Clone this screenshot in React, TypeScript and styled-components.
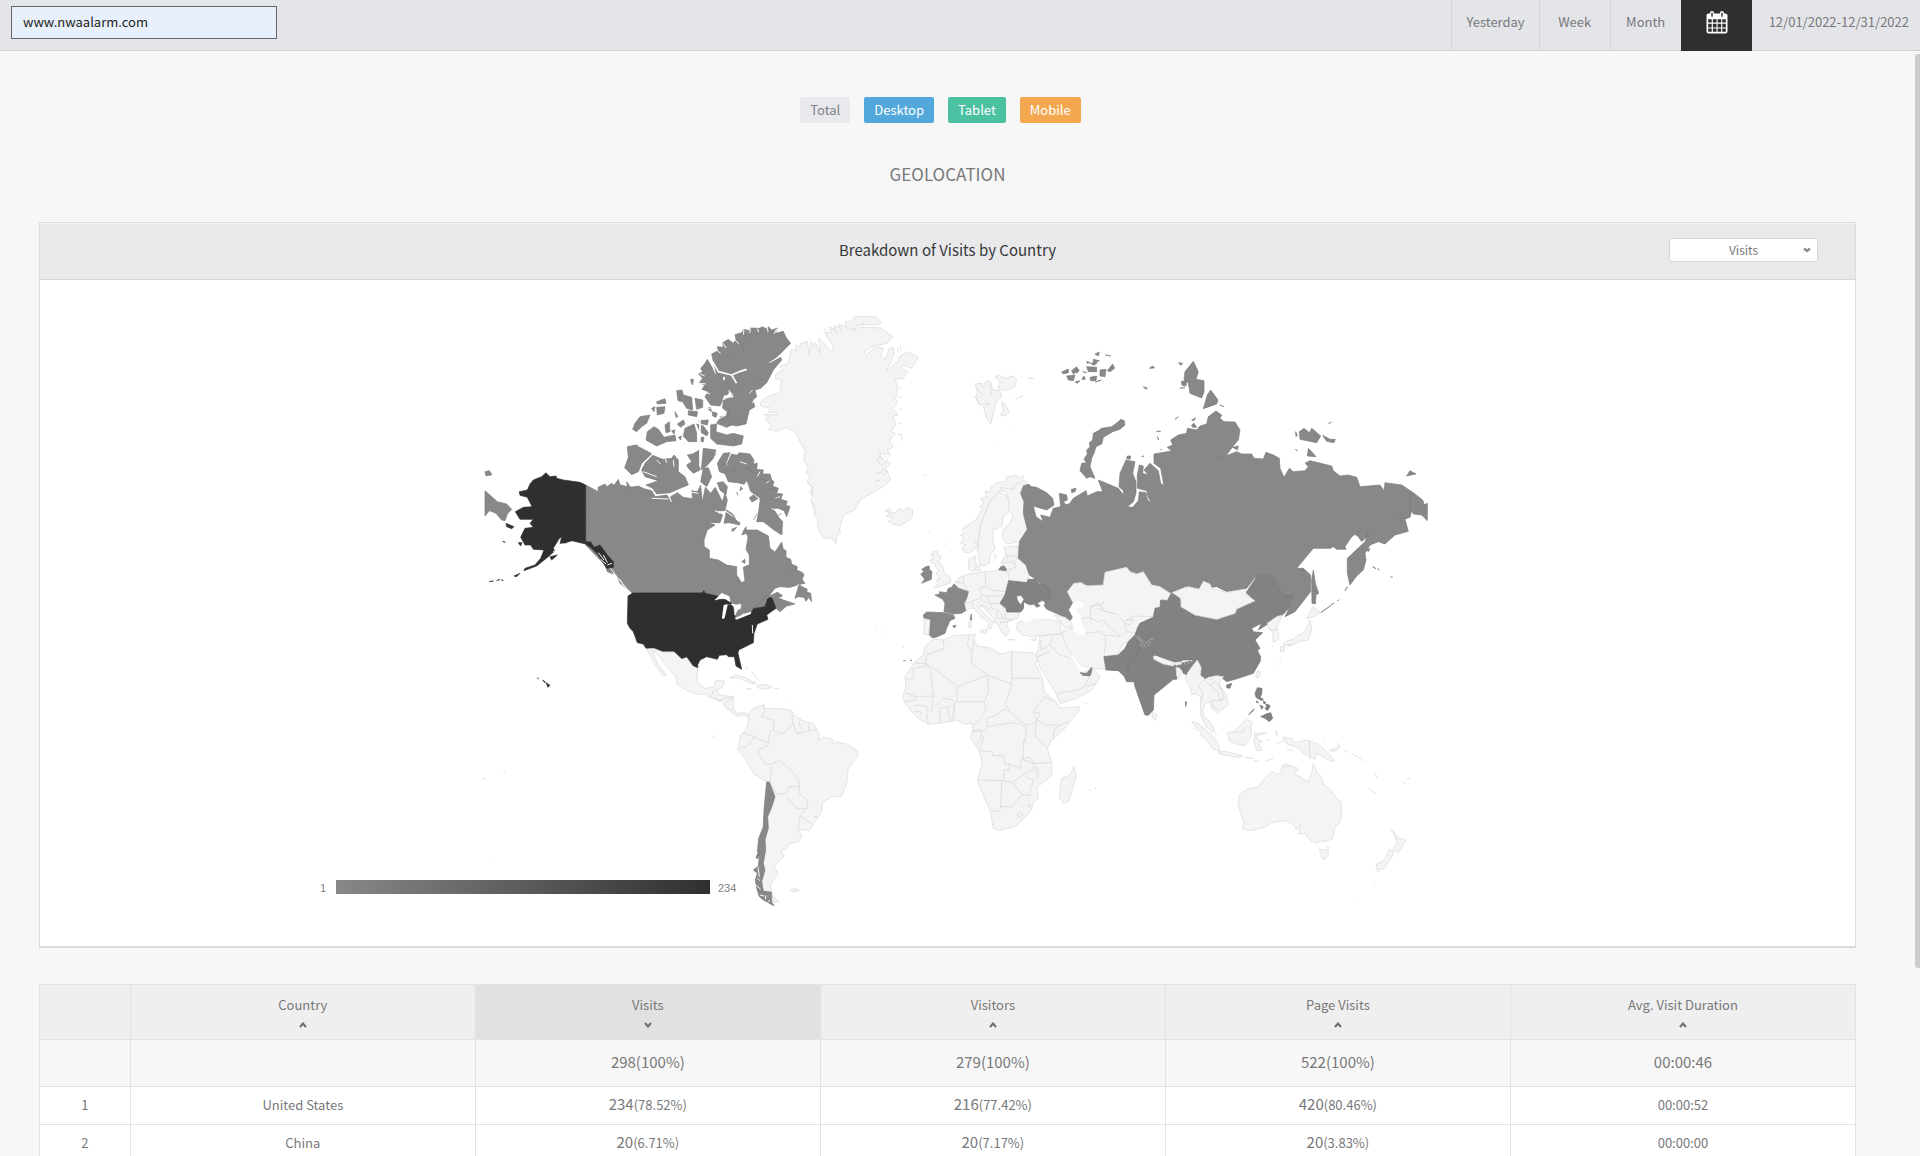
import React from "react";
import styled, { createGlobalStyle } from "styled-components";

const Global = createGlobalStyle`
  * { box-sizing: border-box; }
  body {
    margin: 0;
    background: #f7f7f7;
    color: #77787a;
    font-family: "Noto Sans CJK SC", "Noto Sans", sans-serif;
    font-size: 13px;
    line-height: 20px;
  }
  button, input, select { font: inherit; color: inherit; }
`;

const Page = styled.div`
  height: 100vh;
  display: flex;
  flex-direction: column;
`;

const TopBar = styled.header`
  display: flex;
  justify-content: space-between;
  align-items: stretch;
  height: 51px;
  flex: none;
  background: #e4e5e9;
  box-shadow: inset 0 -1px #d0d1d4;
`;

const SiteInput = styled.input`
  width: 266px;
  height: 33px;
  margin: 6px 0 0 11px;
  padding: 0 11px 2px;
  border: 1px solid #66686b;
  border-radius: 0;
  background: #e8effd;
  color: #1d1e20;
  outline: none;
`;

const Ranges = styled.nav`
  display: flex;
`;

const RangeButton = styled.button<{ $active?: boolean }>`
  min-width: 71px;
  padding: 0 14px 8px;
  border: 0;
  border-left: 1px solid ${(p) => (p.$active ? "#2f2f2f" : "#d5d6da")};
  background: ${(p) => (p.$active ? "#2f2f2f" : "transparent")};
  color: ${(p) => (p.$active ? "#fff" : "#77787a")};
  display: flex;
  align-items: center;
  justify-content: center;
`;

const RangeText = styled.span`
  padding: 0 11px 8px 17px;
  display: flex;
  align-items: center;
`;

const Frame = styled.div`
  position: relative;
  flex: 1;
  min-height: 0;
`;

const Thumb = styled.div`
  position: absolute;
  top: 3px;
  right: 0;
  width: 5px;
  height: calc(83% - 3px);
  border-radius: 3px 0 0 3px;
  background: #cdcdcd;
`;

const Scroller = styled.main`
  height: 100%;
  overflow-y: auto;
  scrollbar-width: none;
  padding: 46px 64px 0 39px;
`;

const Pills = styled.div`
  display: flex;
  justify-content: center;
  gap: 14px;
  padding-right: 14px;
`;

const Pill = styled.button<{ $bg: string; $fg?: string }>`
  height: 26px;
  padding: 0 10px 1px;
  border: 0;
  border-radius: 2px;
  background: ${(p) => p.$bg};
  color: ${(p) => p.$fg || "#fff"};
`;

const Title = styled.h1`
  margin: 38px 0 36px;
  font-size: 17px;
  line-height: 25px;
  font-weight: 400;
  text-align: center;
`;

const Card = styled.section`
  border: 1px solid #dcdcde;
  border-bottom-width: 2px;
  background: #fff;
`;

const CardHead = styled.div`
  display: grid;
  grid-template-columns: 1fr auto 1fr;
  align-items: center;
  height: 57px;
  padding-bottom: 4px;
  border-top: 1px solid #f7f7f7;
  border-bottom: 1px solid #d6d6d8;
  background: #e9e9eb;
`;

const CardTitle = styled.h2`
  grid-column: 2;
  margin: 0;
  font-size: 15px;
  font-weight: 400;
  color: #37383a;
`;

const SelectWrap = styled.label`
  position: relative;
  justify-self: end;
  width: 149px;
  margin-right: 37px;
  svg {
    position: absolute;
    right: 7px;
    top: 9px;
    pointer-events: none;
  }
`;

const Metric = styled.select`
  display: block;
  width: 100%;
  height: 24px;
  padding: 0;
  appearance: none;
  border: 1px solid #d6d6d8;
  border-radius: 3px;
  background: #fff;
  font-size: 12px;
  text-align: center;
  text-align-last: center;
`;

const MapSvg = styled.svg`
  display: block;
  width: 100%;
  height: auto;
`;

const LegendText = styled.text`
  font-family: "Liberation Sans", Arial, sans-serif;
  font-size: 11px;
  fill: #808080;
`;

const Table = styled.table`
  width: 100%;
  margin-top: 36px;
  table-layout: fixed;
  border-collapse: collapse;
  border: 1px solid #e2e2e2;
  background: #fff;
  text-align: center;
`;

const Th = styled.th<{ $sorted?: boolean }>`
  width: 19%;
  height: 55px;
  padding: 0 0 1px;
  border: 1px solid #e2e2e2;
  background: ${(p) => (p.$sorted ? "#e1e1e1" : "#efefef")};
  font-weight: 400;
  &:first-child { width: 5%; }
`;

const SortButton = styled.button`
  width: 100%;
  padding: 0;
  border: 0;
  background: none;
  display: flex;
  flex-direction: column;
  align-items: center;
  gap: 7px;
`;

const Td = styled.td<{ $total?: boolean }>`
  height: ${(p) => (p.$total ? 47 : 38)}px;
  padding: 0 0 2px;
  border: 1px solid #e2e2e2;
  background: ${(p) => (p.$total ? "#f7f7f7" : "#fff")};
  font-size: ${(p) => (p.$total ? 15 : 13)}px;
`;

const Count = styled.span`
  font-size: 15px;
`;

const LIGHT = { fill: "#f4f4f4", stroke: "#dddddd" };
const GREY = { fill: "#888888", stroke: "#7a7a7a" };
const ASIA = { fill: "#828282", stroke: "#737373" };
const DARK = { fill: "#2f2f2f", stroke: "#2f2f2f" };
const WATER = { fill: "#ffffff", stroke: "#ffffff" };
const LINES = { fill: "none", stroke: "#d9d9d9" };
const FJORDS = { fill: "none", stroke: "#ffffff" };
const INLETS = { fill: "none", stroke: "#fafafa" };
const EDGES = { fill: "none", stroke: "#777777" };

type Land = [{ fill: string; stroke: string }, string];

// Each sheet holds its land in thirds of a map unit, counted from its own corner.
const SHEETS: { x: number; y: number; lands: Land[] }[] = [
  {
    // Americas
    x: 470,
    y: 300,
    lands: [
      // Greenland and Iceland
      [LIGHT, "M960 168 965 148 982 152 975 135 992 142 990 132 1012 124 1018 168 1024 125 1030 140 1036 128 1050 160 1046 115 1058 125 1088 158 1090 140 1078 120 1064 98 1085 98 1078 80 1095 90 1092 76 1110 84 1106 72 1130 82 1125 66 1146 62 1156 50 1215 50 1235 66 1225 74 1160 74 1168 82 1235 84 1268 110 1252 130 1205 140 1182 155 1188 165 1215 142 1240 145 1232 165 1245 180 1258 146 1270 142 1272 165 1248 216 1285 182 1290 168 1312 155 1345 172 1325 205 1300 195 1292 208 1312 215 1300 235 1275 238 1284 262 1280 290 1270 292 1284 305 1268 325 1284 345 1266 350 1278 372 1264 392 1276 402 1258 420 1270 440 1252 452 1262 465 1228 458 1240 480 1262 490 1248 505 1262 540 1240 560 1190 588 1170 600 1155 628 1120 645 1108 690 1112 700 1100 705 1098 732 1085 715 1060 715 1045 690 1042 660 1032 645 1036 620 1022 600 1032 590 1018 575 1028 560 1010 545 1020 530 1008 520 1015 500 1000 480 1006 455 990 425 978 398 950 382 920 394 895 388 905 375 885 358 900 352 880 343 920 345 922 338 895 336 902 324 872 318 872 306 892 290 930 278 935 240 915 235 918 222 940 210 930 200 955 190z"],
      [LIGHT, "M1245 632 1260 640 1250 630 1258 625 1268 640 1280 636 1285 625 1298 632 1312 622 1328 630 1328 650 1315 662 1290 677 1268 672 1255 664 1270 655 1248 648 1264 643z"],
      [LINES, "M1290 138 1294 152M1282 142 1286 158M1288 262 1296 264M1286 290 1294 294M1288 325 1296 330M1284 372 1292 370M1282 405 1294 402 1296 422M1232 462 1222 485 1240 498M1220 520 1240 515M1212 545 1232 540M1090 85 1105 100M1108 80 1118 95M1130 90 1160 84 1148 100M1170 75 1180 68 1175 85M1240 465 1255 478 1245 490M1228 470 1238 478M1235 505 1252 515 1240 528M1012 545 1028 565 1026 590M1024 605 1036 640M1060 85 1075 100"],
      // Canadian mainland
      [GREY, "M347 555 385 575 384 562 405 552 410 560 425 550 432 556 445 538 450 554 472 560 470 545 482 562 505 558 522 566 545 572 556 590 590 585 607 612 602 590 622 578 640 592 668 596 665 572 682 575 692 556 697 606 706 562 722 580 736 562 757 605 765 580 772 600 765 632 735 632 758 645 750 668 708 668 735 675 712 690 702 720 703 740 718 750 718 775 745 780 770 795 800 800 800 825 815 848 825 843 820 802 838 794 838 765 828 748 834 712 826 690 862 690 895 708 900 745 915 756 935 726 940 748 948 752 948 772 962 778 965 792 982 800 980 810 998 818 1002 825 996 838 1005 850 990 853 960 862 915 865 895 890 940 868 935 890 922 892 940 900 965 908 975 912 950 918 930 935 918 925 906 893 892 898 885 920 850 925 840 938 820 940 796 958 790 938 800 918 780 905 740 888 700 880 487 880 475 868 450 850 440 825 412 815 405 795 347 735z"],
      [GREY, "M985 853 1000 862 1012 868 1010 876 1022 880 1025 905 1016 892 1008 904 1002 892 985 890 975 895 980 875z"],
      // Victoria, Banks and neighbouring islands
      [GREY, "M472 440 498 435 520 445 545 462 515 490 505 515 485 524 464 503 475 472z"],
      [GREY, "M548 466 578 478 605 475 612 465 625 480 625 515 645 530 655 555 630 565 600 578 560 582 548 565 528 555 565 542 525 530 515 510 525 490z"],
      [GREY, "M652 465 668 462 688 450 690 510 670 520 655 505 650 495 665 485z"],
      [GREY, "M700 445 738 450 730 475 710 498 694 510z"],
      [GREY, "M700 505 715 503 725 530 710 560 692 545z"],
      [GREY, "M760 460 780 458 768 490 780 510 775 525 748 515 742 490z"],
      [GREY, "M742 548 760 545 772 560 768 585 750 570z"],
      // Baffin Island
      [GREY, "M785 462 800 466 808 458 840 462 852 480 850 492 862 490 860 508 880 510 878 522 900 522 905 540 912 545 908 558 925 565 920 580 938 582 932 598 952 604 948 615 960 620 950 650 942 632 925 625 910 625 925 650 938 665 935 705 912 690 880 665 860 665 865 640 870 600 840 580 830 555 800 548 775 545 765 520 778 505 772 490z"],
      [GREY, "M770 630 785 640 812 662 808 675 778 668 762 670z"],
      [GREY, "M800 682 788 695 785 688zM822 690 828 680 830 700 815 705zM815 785 825 778 825 790zM855 585 866 595 850 605 838 595zM800 578 810 575 806 590z"],
      // Ellesmere and Axel Heiberg
      [GREY, "M725 162 745 152 742 140 760 142 758 128 775 118 790 130 798 118 795 104 815 98 822 88 838 92 842 84 870 85 875 80 890 86 895 80 905 90 922 84 915 100 940 94 948 112 962 130 930 162 900 188 932 172 935 180 910 210 890 248 872 265 855 270 860 290 848 300 855 320 838 330 828 372 800 378 785 375 770 382 740 370 752 350 768 348 772 335 758 325 760 300 790 290 772 260 762 238 740 225 730 185z"],
      [GREY, "M712 178 725 200 735 222 765 240 778 265 775 280 758 300 750 318 722 315 705 290 715 275 696 268 704 255 688 248 698 235 686 222 698 215 692 205 705 190z"],
      // Queen Elizabeth Islands
      [GREY, "M722 375 740 372 738 395 770 405 790 400 820 408 815 432 790 438 740 432 722 415z"],
      [GREY, "M620 272 636 270 640 285 665 292 668 330 650 325 638 305 624 302zM675 295 698 300 698 322 680 328zM560 305 585 296 588 310 562 312zM560 322 585 320 582 340 562 345zM545 325 555 320 552 335zM510 350 540 345 530 370 515 380 500 395 488 388 495 370zM532 395 552 380 565 388 582 412 615 405 618 422 590 425 560 438 528 420zM585 375 598 365 600 395 588 398zM605 392 615 390 612 402zM622 372 640 360 645 372 632 382zM645 385 672 372 680 400 680 425 655 425 640 408zM680 372 700 378 715 398 710 408 690 395zM690 412 702 412 700 425 688 425zM662 238 670 238 668 255 664 248zM686 362 715 360 712 375 690 370zM727 335 742 340 738 352 728 348zM655 332 683 335 680 350 655 345zM615 335 624 350 618 352zM712 325 722 322 724 335zM625 412 634 408 632 420z"],
      [FJORDS, "M728 185 745 215 785 225 808 215 830 208M785 225 800 250M762 230 762 240M690 360 690 500M760 300 765 288 790 290M748 388 775 392 790 384 818 396"],
      [INLETS, "M898 188 930 170M545 595 600 597 605 606M810 485 830 492M640 500 662 555M765 632 790 650M735 632 750 640M655 575 685 580M775 270 790 285M600 350 605 365M640 335 655 350M700 330 728 322M740 360 768 345M668 445 712 440M562 448 600 468M505 438 540 455M520 515 560 530M720 440 780 440M838 100 842 86M822 90 820 104M795 120 808 132M862 86 866 96M892 82 894 96M920 86 912 102M742 152 752 160M760 130 768 144M848 270 838 280M858 300 846 308M690 222 704 228M690 250 708 252M705 276 720 282M418 800 440 830 470 865M430 815 436 832M450 838 460 856M870 515 862 530M900 540 888 550M930 590 915 596M905 625 930 640M560 480 572 492M610 480 612 500M585 475 590 488"],
      [WATER, "M798 550 822 556 830 545 840 575 868 595 862 640 835 645 832 680 800 660 790 640 808 600z"],
      [GREY, "M838 594 850 584 864 596 846 606zM812 560 818 566 810 572z"],
      [EDGES, "M805 118 822 152M838 98 845 112M770 170 790 160M708 668 735 675M565 480 582 495M880 545 905 540M885 570 915 565M898 600 925 595M480 572 485 560M850 925 900 880M740 460 720 480M590 585 600 600M830 500 850 520M920 650 935 640M775 335 775 350M875 82 872 98M905 92 900 106M808 375 806 360M780 378 784 364M752 420 770 428M790 410 800 425M740 190 752 184M698 268 712 262M862 640 850 660M980 808 962 812M880 240 860 232M800 250 812 272M940 700 930 690M750 500 765 490M800 500 785 515"],
      // United States
      [DARK, "M474 888 488 879 698 879 701 872 706 880 750 890 735 900 765 895 780 905 785 912 762 915 756 955 764 955 772 916 784 914 793 922 792 945 800 958 843 938 850 926 885 920 892 898 898 893 906 894 918 925 890 945 894 958 862 972 852 1000 850 1028 806 1050 804 1060 815 1108 798 1098 793 1070 775 1070 770 1064 748 1066 742 1078 710 1070 690 1080 682 1105 668 1098 650 1072 635 1077 612 1055 578 1055 552 1045 528 1045 520 1032 502 1028 490 995 480 985 472 970z"],
      [WATER, "M735 900 755 880 778 890 780 905 765 896 748 896zM762 916 772 914 762 955 757 955zM785 912 800 915 812 912 812 925 802 930 795 945 792 922zM795 955 842 936 842 941 800 958zM915 868 930 862 975 868 985 853 975 885 965 895 940 885 930 880z"],
      [INLETS, "M847 975 848 1000M690 1085 684 1098"],
      [DARK, "M347 555 330 547 280 540 260 535 258 528 240 530 228 518 215 530 190 540 180 552 172 570 148 575 150 586 172 592 186 620 160 622 136 635 150 658 190 658 180 670 190 682 165 685 152 712 165 735 182 735 190 748 222 750 212 775 195 795 165 805 162 812 200 798 235 770 255 752 250 745 268 715 275 712 270 730 295 728 305 722 347 732 362 742 385 765 410 805 430 802 430 785 412 765 390 735 372 742 362 726 347 725zM240 770 262 765 245 780zM108 670 132 680 125 686 110 680zM145 728 156 728 152 738zM98 724 106 727zM132 828 150 820 140 830zM58 845 70 843zM80 842 90 838zM94 840 100 841z"],
      [INLETS, "M385 758 402 780M392 778 408 792M400 765 412 788M412 795 426 790M268 735 250 756M290 730 300 726"],
      [DARK, "M228 1148 240 1156 234 1162zM218 1140 226 1146 224 1148zM202 1134 206 1136z"],
      [GREY, "M45 515 58 512 66 524 48 528zM45 572 82 605 110 612 125 628 112 642 105 662 95 660 78 640 58 632 45 648z"],
      // Mexico, Central America and the Caribbean
      [LIGHT, "M530 1047 552 1046 578 1056 612 1056 635 1078 650 1073 668 1098 682 1105 682 1140 690 1155 705 1165 730 1162 738 1142 763 1142 758 1160 742 1170 746 1185 790 1190 790 1225 800 1240 825 1238 840 1245 835 1252 822 1245 800 1248 770 1225 755 1205 720 1192 705 1182 680 1183 650 1170 622 1155 618 1130 590 1100 562 1060 545 1050 562 1090 590 1125 580 1127 550 1085z"],
      [LIGHT, "M778 1134 800 1126 825 1132 858 1150 845 1151 805 1134zM862 1156 885 1153 905 1162 885 1168 862 1163zM830 1166 845 1168zM914 1165 926 1166z"],
      [LINES, "M725 1190 730 1172 742 1168M745 1204 765 1195 790 1192M765 1210 790 1192M770 1226 790 1228M735 1192 745 1200M825 1098 835 1108M845 1115 868 1142M962 1195 963 1196M728 1306 731 1314M34 1437 46 1435M100 1412 106 1415M70 1680 72 1682M1213 988 1218 990M1235 995 1240 997M1298 1042 1302 1044"],
      // South America
      [LIGHT, "M835 1252 838 1240 850 1225 885 1213 880 1225 905 1225 950 1228 965 1232 970 1245 1000 1263 1030 1270 1048 1305 1045 1322 1060 1312 1088 1318 1088 1332 1100 1326 1130 1332 1162 1352 1163 1370 1135 1405 1130 1450 1115 1488 1085 1490 1058 1508 1055 1535 1028 1575 1018 1592 985 1588 995 1610 985 1625 955 1632 950 1648 932 1652 942 1668 912 1700 925 1720 900 1755 905 1776 880 1775 870 1700 890 1446 850 1420 825 1375 805 1350 805 1335 812 1305 825 1295 835 1270z"],
      [LINES, "M880 1217 885 1235 875 1250 912 1260 910 1290 900 1295 895 1335 865 1350 865 1365 885 1392 905 1392 930 1382 968 1415 985 1440 988 1460 958 1460 950 1480 920 1482 900 1450 905 1400M820 1300 850 1308 865 1318 895 1328M855 1310 830 1340 812 1342M910 1290 935 1302 945 1295 970 1272 965 1250 975 1245M970 1272 980 1300 1000 1298 1025 1290 1040 1290M988 1262 990 1280 1000 1295M1018 1268 1015 1292M988 1460 988 1480 1010 1500 1012 1525 980 1525 950 1490M1018 1515 990 1548 1025 1572M990 1548 985 1588M1030 1550 1045 1552"],
      [GREY, "M890 1446 898 1446 915 1490 905 1522 893 1550 895 1585 885 1620 887 1650 880 1690 885 1710 875 1745 880 1773 905 1777 905 1805 912 1818 895 1808 880 1800 868 1790 860 1765 856 1740 862 1720 850 1710 865 1698 868 1670 862 1655 866 1615 880 1580 882 1530zM862 1662 868 1662 864 1676 858 1674z"],
      [INLETS, "M864 1700 868 1730M858 1755 872 1768M870 1785 882 1788M888 1786 886 1798M892 1808 900 1800M862 1735 870 1742"],
      [LIGHT, "M906 1782 925 1806 910 1806zM962 1770 975 1766 988 1770 978 1775 965 1774z"],
    ],
  },
  {
    // Northern Europe
    x: 890,
    y: 300,
    lands: [
      [LIGHT, "M255 252 275 250 280 262 290 242 302 245 308 270 330 272 334 292 318 305 310 340 302 372 290 355 280 320 300 310 270 315 258 290 262 275zM315 230 325 225 345 235 370 228 380 240 375 260 350 272 325 265 330 245zM335 305 345 312 358 335 345 348 332 345 340 330zM415 236 425 232 430 236zM388 292 400 288z"],
      [LINES, "M254 288 268 315M298 250 305 285M262 270 280 285M378 292 380 298M364 375 368 372M318 438 320 438M102 528 110 523M115 697 120 700M162 730 165 735M355 760 350 755"],
      // Norway, Sweden, Finland
      [LIGHT, "M410 545 395 540 402 528 385 534 378 524 365 530 350 530 345 545 320 548 305 560 300 575 285 575 290 590 272 595 282 610 268 620 278 628 258 660 240 670 215 690 225 700 212 705 220 715 212 730 228 735 215 745 225 758 240 758 262 740 270 680 285 640 302 600 325 575 355 570 380 560 392 565z"],
      [LIGHT, "M262 748 272 680 285 640 302 600 325 575 352 590 362 632 340 650 335 680 310 690 308 720 315 745 300 765 298 788 285 798 270 795z"],
      [LIGHT, "M328 562 350 580 356 600 356 632 370 645 360 668 340 690 336 715 350 732 388 725 412 688 400 640 402 605 392 580 402 560 385 545 370 568z"],
      // Denmark, Baltics, Belarus
      [LIGHT, "M236 778 256 768 255 785 262 795 252 815 236 808zM255 802 268 798 270 812 258 812zM342 742 385 738 384 775 408 795 418 825 410 848 355 842 350 812 340 812 335 788 342 770 352 775z"],
      [LINES, "M345 765 382 770M335 788 370 785 384 775M370 785 378 800 350 812M310 770 318 765 315 778M252 722 270 745M410 848 355 842"],
      [GREY, "M326 810 332 800 342 798 350 808 347 812z"],
      // British Isles
      [LIGHT, "M130 755 145 752 142 765 155 770 145 785 160 800 162 818 180 832 182 848 150 860 130 865 145 850 138 840 150 838 138 820 148 812 138 805 135 790 122 788 128 775z"],
      [LINES, "M118 770 126 762M126 758 132 765M118 782 128 778"],
      [GREY, "M92 822 102 815 95 808 108 800 118 798 118 808 126 815 124 838 95 850 104 838z"],
      // Franz Josef Land
      [GREY, "M515 216 535 207 535 218 520 222zM545 212 560 200 565 212 550 222zM530 228 555 225 550 242 535 240zM560 205 568 210 560 220zM555 245 570 243 562 250zM575 238 582 228 586 238zM590 200 620 202 620 215 595 215zM600 232 620 228 618 242 602 242zM630 210 648 208 645 230 630 228zM652 212 668 192 674 205 660 215zM610 178 628 182 610 190zM615 162 628 156 625 168zM590 184 600 188 592 190zM600 190 622 188 612 196zM646 165 662 168zM616 246 634 240zM578 215 590 218zM778 205 788 198 794 204zM760 260 772 264 768 268z"],
      // Novaya Zemlya
      [GREY, "M703 362 705 375 690 388 668 395 640 412 635 432 618 440 612 460 605 475 600 500 615 535 600 530 590 535 570 512 575 490 590 488 582 478 592 462 590 450 600 440 598 428 608 420 610 400 625 392 635 385 665 380 685 365 692 358z"],
    ],
  },
  {
    // Russia
    x: 1050,
    y: 340,
    lands: [
      [GREY, "M-80 438 -65 432 -55 440 -40 442 -10 458 8 475 12 495 -10 510 -50 498 -42 530 -20 545 -28 525 -15 528 0 532 10 505 32 500 28 460 50 465 52 480 40 485 48 494 58 492 70 475 108 452 112 468 140 455 158 455 145 420 205 445 220 465 220 452 207 440 210 400 228 360 255 365 248 400 258 425 258 460 250 485 232 500 248 502 265 482 268 455 288 458 292 480 308 488 295 475 290 452 262 445 262 405 268 375 280 378 278 400 295 405 282 390 300 370 325 392 332 430 342 438 332 385 312 370 312 342 365 333 352 322 368 315 362 300 385 285 410 280 412 265 440 270 450 258 470 252 475 230 498 213 515 225 510 235 522 245 555 246 570 270 565 300 552 315 530 345 518 350 535 345 560 335 575 342 605 342 612 355 640 357 648 337 670 345 688 355 690 385 702 412 718 385 730 395 765 392 775 380 765 370 780 362 845 378 850 392 870 408 895 405 920 412 930 440 990 435 1002 452 1005 428 1055 435 1090 458 1118 480 1120 495 1132 490 1132 542 1115 525 1090 522 1085 512 1080 530 1065 538 1075 574 1035 585 1005 612 985 605 960 615 945 640 948 660 940 690 920 708 900 735 892 700 892 655 945 605 955 575 950 590 935 605 925 590 915 583 905 590 885 620 888 628 860 628 850 620 842 625 790 625 740 685 760 685 782 705 782 755 735 815 705 830 725 790 728 768 700 768 665 710 640 703 615 712 590 745 530 755 500 740 480 742 460 725 445 748 405 740 362 758 345 755 330 740 305 735 280 697 255 702 240 695 230 682 165 697 160 738 120 738 90 728 70 732 52 755 70 785 55 810 68 832 60 842 30 825 -10 808 -25 785 0 760 -40 720 -62 705 -72 675 -95 655 -92 605 -68 568 -80 520 -78 485 -88 460z"],
      [EDGES, "M1080 455 1080 532 1042 535M502 362 515 350M1120 482 1122 505"],
      // Severnaya Zemlya and the arctic islands
      [GREY, "M430 64 445 95 438 118 462 122 462 155 455 174 420 160 415 128 402 120 405 95zM394 124 410 122 408 138 396 136zM390 145 405 142zM386 68 398 70 392 76zM482 150 504 180 500 192 460 206 472 165zM510 195 522 200zM748 275 762 265 778 278 785 265 812 288 800 308 750 298zM818 286 840 298 856 298 852 308 830 304zM775 325 785 335 798 350 772 348zM1070 408 1080 392 1098 402zM737 275 742 285 738 290zM736 328 742 332zM836 250 844 247zM375 238 385 230zM425 240 437 234 432 242zM320 274 332 274zM322 290 326 300zM232 348 242 348 240 358 230 356zM275 350 282 348zM64 448 78 445 75 455 65 458zM425 255 432 250 440 262 428 262zM332 328 336 330zM548 322 565 318 562 330z"],
      // Sakhalin and the Kurils
      [GREY, "M790 690 796 730 806 760 798 765 796 792 786 790 785 720zM746 688 760 688 762 695zM950 630 960 625 955 635zM968 680 978 686zM982 686 988 690zM1022 711 1028 712zM885 752 892 740zM862 783 866 779zM842 796 852 789zM812 818 842 797z"],
    ],
  },
  {
    // Africa, southern Europe and the Middle East
    x: 900,
    y: 540,
    lands: [
      // Central Europe, Italy, Balkans, Turkey
      [LIGHT, "M160 135 180 112 192 105 222 100 255 95 300 92 326 98 326 122 315 165 300 190 310 205 340 218 358 215 355 235 325 240 322 262 330 270 318 290 305 275 298 262 290 245 262 215 245 198 235 200 245 212 268 235 290 248 278 250 272 268 262 262 268 250 240 228 222 205 210 205 195 215 195 190 205 155z"],
      [LINES, "M192 108 190 130 202 150 205 160M255 96 258 138 275 150 318 155M258 138 238 145 245 165 265 168 290 168 312 165M245 165 240 175 215 185 196 188M240 175 250 185 270 190 298 190M265 168 268 185M215 185 220 200M270 190 275 205 298 212M290 212 290 235 310 235 340 240M298 212 310 235M240 195 260 200 270 215M300 248 320 245 340 240M165 125 188 130M175 118 182 112M315 218 318 236"],
      [LIGHT, "M242 272 262 268 258 282 240 275zM206 245 214 242 214 262 206 262zM352 248 380 238 410 232 480 245 485 280 435 285 400 290 365 285 350 268zM392 300 410 294 405 302zM325 298 345 300z"],
      [GREY, "M105 165 120 162 118 155 140 158 145 145 155 142 162 132 175 145 205 155 200 175 192 190 197 212 185 220 160 222 132 215 135 190 128 178zM210 238 214 222 215 240z"],
      [GREY, "M70 225 80 216 132 218 160 225 165 235 150 242 140 265 135 280 112 290 98 294 88 285 90 240 72 235zM158 258 168 256 164 264z"],
      [LIGHT, "M72 236 90 240 86 285 72 282z"],
      [ASIA, "M326 122 380 128 385 118 408 118 418 132 435 135 452 155 450 175 420 182 425 195 410 202 402 192 390 195 370 185 372 205 362 216 320 216 318 205 300 190 315 165z"],
      [WATER, "M352 170 362 168 370 178 362 192 355 182zM414 190 430 184 434 192 424 198zM375 195 392 198 408 208 425 205 440 212 462 225 455 235 410 235 375 245 355 235 370 215z"],
      // Caucasus, Iran, Central Asia
      [LIGHT, "M462 225 495 232 512 245 518 262 495 262 480 245z"],
      [LIGHT, "M502 155 522 130 545 128 558 138 610 135 615 97 680 82 690 95 710 102 730 95 755 135 780 140 810 160 808 178 788 180 785 205 765 208 762 230 720 250 712 262 722 280 690 292 685 305 665 315 655 340 610 350 620 388 575 385 550 378 520 355 510 345 498 318 485 280 518 262 540 280 558 280 550 250 530 235 525 205 550 190 540 180 520 190z"],
      [WATER, "M518 192 532 182 550 190 545 202 528 205 530 220 545 225 540 240 555 265 558 282 540 285 522 272 525 245 512 215z"],
      [LINES, "M572 240 572 200 595 188 615 215 650 222 672 245 700 228 762 230M545 235 570 232 590 245 610 240 625 260 665 290M555 280 600 275 612 285 618 300 612 345M572 200 600 195 612 185M590 205 640 222M665 290 680 275 672 245M680 240 700 240 690 255 672 250M680 275 720 280M620 285 660 290M498 262 485 280"],
      [LIGHT, "M408 345 415 330 420 288 485 282 500 318 515 345 530 375 545 380 560 395 578 385 602 410 575 450 530 475 480 490 470 465 440 415 418 380z"],
      [LINES, "M420 330 450 315 460 290M450 315 480 345 512 355M412 355 430 340 450 335M472 462 500 455 535 450 552 440 590 430M552 440 570 408M408 350 430 345M425 330 422 300"],
      [WATER, "M512 345 520 350 536 372 542 380 556 384 560 392 546 392 534 386 526 366z"],
      [GREY, "M540 398 560 400 575 382 575 395 570 408 548 406z"],
      // Africa
      [LIGHT, "M100 297 130 300 160 287 215 284 228 282 222 295 230 318 275 325 300 342 335 335 400 338 408 345 412 365 405 370 428 415 432 455 450 470 470 490 480 505 538 500 535 515 490 570 455 600 442 625 455 670 455 708 410 742 415 775 398 790 395 810 350 858 295 872 280 865 270 810 245 755 232 720 247 670 237 630 210 590 220 570 215 550 190 552 170 540 130 548 85 553 55 535 35 515 15 490 8 470 18 440 15 410 45 365 70 345 75 320z"],
      [LIGHT, "M522 680 530 708 505 785 490 790 478 770 485 715 510 705zM755 515 772 525 765 542 757 532z"],
      [LINES, "M45 370 75 370 75 380 40 385 40 415 18 418M75 370 92 390 100 468 40 470M130 300 132 325 80 345 78 370 175 440 262 405 215 370 215 340 202 315 208 285M220 300 218 325 215 340M262 405 335 432 335 332M335 415 422 415M335 432 328 460 315 490 330 515 355 540 380 555 405 550 420 520 400 515 430 475M430 470 470 485M262 410 265 455 252 485 170 485 172 440M252 485 258 510 235 545 220 555M262 535 290 525 312 508 330 515M258 535 262 560 290 555 345 548 380 560 378 585 370 610 370 660 400 670 455 668M400 515 410 540 440 555 480 555 508 545M410 540 405 590 445 625M460 600 462 570 480 555M378 595 370 600 380 610M237 632 275 635 280 648 310 645 315 672 328 672 328 690 312 690 312 722 235 720M328 672 360 685 365 658 385 652 402 665 400 690 375 700 335 728 312 722M305 725 302 800 298 815 272 812M302 800 335 800 365 765 395 765M340 728 365 765M375 710 398 720 395 745 385 762M405 680 412 715 418 700 410 680M350 820 362 815 368 825 355 832zM385 792 392 795 388 802zM100 468 95 510 85 515M105 500 130 475 158 480 165 490 155 540M120 505 120 545M145 500 148 545M162 490 162 540M120 505 145 500M80 515 85 553M45 495 80 500 80 515M15 485 50 480 40 465 18 460M40 515 60 515 65 525M215 572 240 570 245 590 230 615M220 575 250 572 262 560M250 590 245 618 238 625"],
      // South Asia
      [ASIA, "M612 350 655 345 675 325 685 305 705 285 730 290 750 320 762 345 820 378 830 372 890 360 890 370 860 405 850 400 845 388 830 382 830 418 820 418 762 465 760 510 745 526 735 525 705 440 702 425 680 425 672 408 655 392 618 390z"],
      [LIGHT, "M760 350 770 345 822 368 820 378 790 372 762 358z"],
      [{ fill: "none", stroke: "#6f6f6f" }, "M690 405 680 372 720 330 705 290"],
      [LINES, "M10 322 12 322M555 490 562 490M568 750 572 753M584 745 588 745"],
      [GREY, "M856 485 860 486 857 500zM10 362 16 362zM30 361 36 361z"],
    ],
  },
  {
    // East Asia and Oceania
    x: 1080,
    y: 560,
    lands: [
      [ASIA, "M172 205 180 190 220 172 225 145 240 142 242 120 262 122 275 98 300 115 303 140 345 165 410 178 465 160 470 145 525 122 498 98 530 50 545 43 575 50 608 105 638 108 630 140 608 165 580 182 535 210 545 190 515 205 520 215 548 218 525 240 540 265 532 272 542 290 540 305 520 340 475 355 440 365 415 345 385 350 375 358 362 345 366 325 352 300 310 300 290 310 282 305 225 285 205 265 195 240 165 225zM440 375 455 370 450 385 440 383z"],
      [{ fill: "none", stroke: "#c9c9c9" }, "M165 228 185 245M172 226 190 243M178 252 188 262M186 248 200 262M194 243 208 258M202 240 212 250M210 238 220 236M312 305 316 314M322 302 326 312M332 299 336 308"],
      [LIGHT, "M278 98 325 80 358 88 370 64 390 72 395 85 440 97 495 88 500 108 525 122 470 147 465 160 410 178 345 165 303 140 303 115z"],
      [LIGHT, "M288 322 300 325 302 345 295 358 290 345zM284 308 300 306 305 312 288 316z"],
      // Indochina and Malaysia
      [LIGHT, "M352 300 362 320 360 345 375 358 405 348 430 350 420 365 418 375 440 405 445 435 412 458 395 445 390 425 375 430 368 450 372 470 390 485 405 512 400 518 378 500 362 465 362 410 345 400 335 405 330 380 315 355 325 335 340 315z"],
      [LINES, "M375 358 355 375 368 400 365 425M375 358 390 375 415 395 418 420 440 410M390 375 405 365 418 378 430 405 425 422 395 420M395 422 400 440 412 448M392 350 400 362"],
      // Korea, Japan, Taiwan
      [LIGHT, "M562 190 590 170 608 165 600 180 590 200 598 235 580 248 578 215 565 205zM700 140 722 158 700 170 680 175 690 155zM690 180 695 210 685 240 655 245 640 255 610 255 615 245 645 235 655 225 670 220 682 200zM602 260 615 258 612 275 602 275zM622 255 635 250 632 260zM535 330 542 338 532 356 527 345z"],
      [LINES, "M570 210 592 208M586 320 588 319M600 300 602 305M576 258 580 258"],
      // Philippines
      [ASIA, "M532 383 546 385 545 402 540 412 550 418 545 422 528 412 525 400zM550 422 558 428 552 432zM540 435 550 440 545 448zM555 445 565 435 570 440 562 452zM542 470 558 462 572 458 578 475 568 485 555 475zM506 464 522 446 518 454zM530 422 536 428 530 428zM556 432 570 436 562 440z"],
      // Indonesia, Borneo, New Guinea
      [LIGHT, "M335 485 352 488 395 525 415 550 418 572 400 568 375 535zM442 518 460 515 500 478 520 488 512 500 515 525 495 558 470 552 450 545zM415 575 440 575 488 588 480 593 418 582zM525 520 560 518 530 528 535 540 548 545 535 548 545 570 530 572 522 545zM608 532 635 535 645 548 680 540 715 552 745 580 765 605 740 598 710 580 705 598 670 582 655 562 620 552zM748 572 778 560 770 550 780 562 765 574z"],
      [LINES, "M688 542 690 598M495 592 520 596M522 602 535 603M555 605 580 595M460 518 490 515 500 500M340 505 350 512M360 525 370 535M560 540 572 540M588 510 590 530M585 520 595 522M590 550 608 545M622 570 640 570M793 570 805 577M815 580 830 590M832 588 845 598M845 602 850 608M885 640 893 654M866 685 888 702M968 665 978 672M980 658 990 654M28 692 32 690M42 686 46 686M434 498 436 498M732 543 736 543M577 494 579 496M405 520 410 528"],
      // Australia and New Zealand
      [LIGHT, "M478 705 500 688 535 680 555 655 575 635 590 642 602 638 605 622 630 617 655 625 645 642 685 665 695 640 700 610 712 640 722 648 732 675 748 685 765 708 782 725 785 765 778 790 765 800 757 838 730 845 722 843 712 850 690 840 675 822 655 820 662 792 650 810 638 790 610 782 575 788 555 802 510 812 488 805 492 785 475 740z"],
      [LIGHT, "M718 868 744 870 745 885 735 898 728 897zM932 808 948 822 950 832 978 840 955 878 940 865 950 850 945 828zM928 868 942 872 935 892 910 928 888 928 890 912 915 898z"],
      [LINES, "M892 934 898 935M882 978 886 975M825 1026 827 1029M710 858 714 861M742 858 745 865M605 618 618 612 635 620"],
    ],
  },
];

const WorldMap = () => (
  <MapSvg viewBox="40 280 1815 666" role="img" aria-label="Visits by country">
    <defs>
      <linearGradient id="scale">
        <stop offset="0" stopColor="#888888" />
        <stop offset="1" stopColor="#2f2f2f" />
      </linearGradient>
    </defs>
    {SHEETS.map((s) => (
      <g key={`${s.x}-${s.y}`} transform={`translate(${s.x} ${s.y}) scale(0.33333)`}>
        {s.lands.map(([paint, d], i) => (
          <path
            key={i}
            d={d}
            fill={paint.fill}
            stroke={paint.stroke}
            strokeWidth={paint === FJORDS ? 5 : paint === INLETS ? 3 : paint === LINES || paint === LIGHT ? 2.4 : 2}
            strokeLinejoin="round"
          />
        ))}
      </g>
    ))}
    <LegendText x="326" y="892" textAnchor="end">1</LegendText>
    <rect x="336" y="880" width="374" height="14" fill="url(#scale)" />
    <LegendText x="718" y="892">234</LegendText>
  </MapSvg>
);

const CalendarIcon = () => (
  <svg width="22" height="24" viewBox="0 0 22 24" aria-hidden="true">
    <path
      fill="#fff"
      fillRule="evenodd"
      d="M2 3.5h2V3a2 2 0 0 1 4 0v.5h6V3a2 2 0 0 1 4 0v.5h1.500A2 2 0 0 1 21.500 5.500V21.500a2 2 0 0 1-2 2H2.500a2 2 0 0 1-2-2V5.500A2 2 0 0 1 2 3.500zM5.300 2.800v4h1.400v-4zM15.300 2.800v4h1.400v-4zM2.200 9.300v3.300h3.500V9.300zM6.900 9.300v3.300h3.600V9.300zM11.600 9.300v3.300h3.600V9.300zM16.300 9.300v3.300h3.500V9.300zM2.200 13.800v3.600h3.500v-3.600zM6.900 13.800v3.600h3.600v-3.600zM11.600 13.800v3.600h3.600v-3.600zM16.300 13.800v3.600h3.500v-3.600zM2.200 18.600v3.200h3.500v-3.200zM6.900 18.600v3.200h3.600v-3.200zM11.600 18.600v3.200h3.600v-3.200zM16.300 18.600v3.200h3.500v-3.200z"
    />
  </svg>
);

const Caret = ({ down }: { down?: boolean }) => (
  <svg width="8" height="6" viewBox="0 0 8 6" aria-hidden="true">
    <path d={down ? "M1 1l3 3.500 3-3.500" : "M1 5l3-3.500 3 3.500"} fill="none" stroke="#6a6b6d" strokeWidth="2" />
  </svg>
);

const COLUMNS = ["Country", "Visits", "Visitors", "Page Visits", "Avg. Visit Duration"];

const ROWS = [
  { name: "United States", cells: [["234", "(78.52%)"], ["216", "(77.42%)"], ["420", "(80.46%)"]], time: "00:00:52" },
  { name: "China", cells: [["20", "(6.71%)"], ["20", "(7.17%)"], ["20", "(3.83%)"]], time: "00:00:00" },
];

export default function App() {
  return (
    <Page>
      <Global />
      <TopBar>
        <SiteInput type="text" aria-label="Site" defaultValue="www.nwaalarm.com" />
        <Ranges>
          <RangeButton>Yesterday</RangeButton>
          <RangeButton>Week</RangeButton>
          <RangeButton>Month</RangeButton>
          <RangeButton $active aria-label="Choose dates">
            <CalendarIcon />
          </RangeButton>
          <RangeText>12/01/2022-12/31/2022</RangeText>
        </Ranges>
      </TopBar>
      <Frame>
        <Scroller>
          <Pills>
            <Pill $bg="#e8e9ed" $fg="#808184">Total</Pill>
            <Pill $bg="#52a7db">Desktop</Pill>
            <Pill $bg="#4bc1a2">Tablet</Pill>
            <Pill $bg="#f3a84f">Mobile</Pill>
          </Pills>
          <Title>GEOLOCATION</Title>
          <Card>
            <CardHead>
              <CardTitle>Breakdown of Visits by Country</CardTitle>
              <SelectWrap>
                <Metric aria-label="Metric" defaultValue="Visits">
                  <option>Visits</option>
                  <option>Visitors</option>
                  <option>Page Visits</option>
                </Metric>
                <svg width="8" height="6" viewBox="0 0 8 6" aria-hidden="true">
                  <path d="M1 1.500l3 2.500 3-2.500" fill="none" stroke="#8a8b8d" strokeWidth="2.400" />
                </svg>
              </SelectWrap>
            </CardHead>
            <WorldMap />
          </Card>
          <Table>
            <thead>
              <tr>
                <Th aria-label="Rank" />
                {COLUMNS.map((c) => (
                  <Th key={c} $sorted={c === "Visits"}>
                    <SortButton>
                      {c}
                      <Caret down={c === "Visits"} />
                    </SortButton>
                  </Th>
                ))}
              </tr>
            </thead>
            <tbody>
              <tr>
                <Td $total />
                <Td $total />
                <Td $total>298(100%)</Td>
                <Td $total>279(100%)</Td>
                <Td $total>522(100%)</Td>
                <Td $total>00:00:46</Td>
              </tr>
              {ROWS.map((r, i) => (
                <tr key={r.name}>
                  <Td>{i + 1}</Td>
                  <Td>{r.name}</Td>
                  {r.cells.map(([n, pct], j) => (
                    <Td key={j}>
                      <Count>{n}</Count>
                      {pct}
                    </Td>
                  ))}
                  <Td>{r.time}</Td>
                </tr>
              ))}
            </tbody>
          </Table>
        </Scroller>
        <Thumb />
      </Frame>
    </Page>
  );
}
